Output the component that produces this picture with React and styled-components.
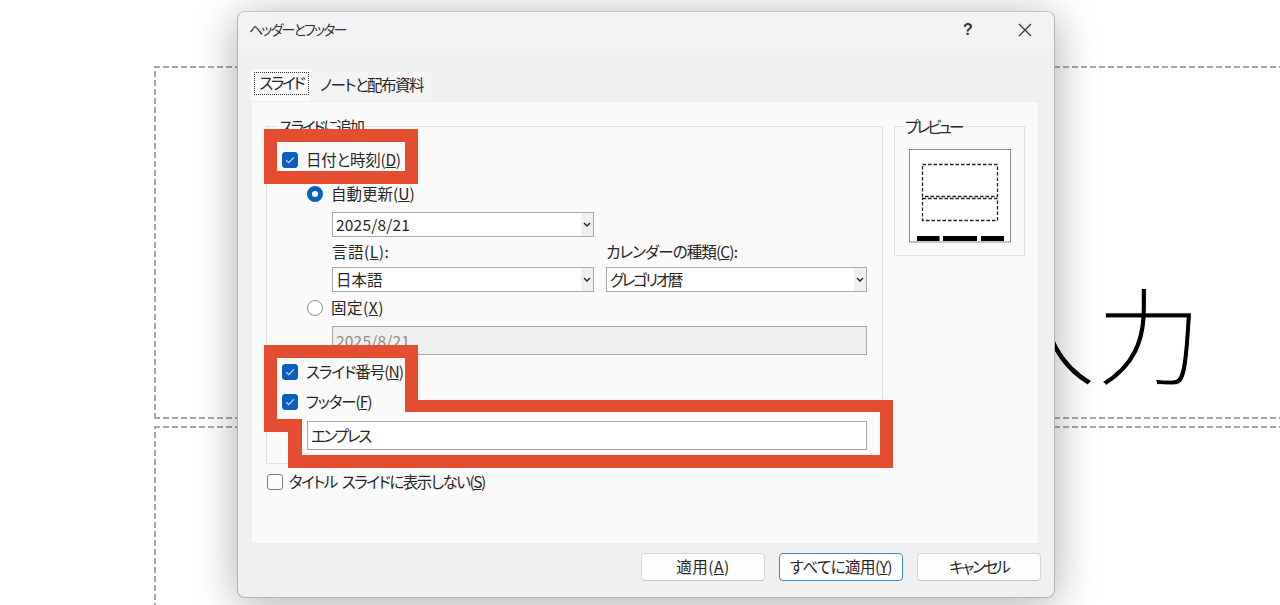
import React from 'react'
import styled, { createGlobalStyle } from 'styled-components'

const GlobalStyle = createGlobalStyle`
  html, body {
    margin: 0;
    height: 100%;
    background: #fff;
    overflow: hidden;
  }
  body {
    font-family: "Noto Sans CJK JP", "Noto Sans", sans-serif;
    font-feature-settings: "palt";
    font-size: 15.5px;
    color: #262626;
  }
  * {
    box-sizing: border-box;
  }
`

const Slide = styled.div`
  position: relative;
  width: 1280px;
  height: 605px;
  overflow: hidden;
`

const dash = '#a6a6a6'

const Placeholder = styled.div`
  position: absolute;
  left: 154px;
  top: ${props => props.$top}px;
  width: 1200px;
  height: ${props => props.$height}px;
  background-image:
    repeating-linear-gradient(90deg, ${dash} 0 6px, transparent 6px 9px),
    repeating-linear-gradient(90deg, ${dash} 0 6px, transparent 6px 9px),
    repeating-linear-gradient(0deg, ${dash} 0 6px, transparent 6px 9px);
  background-size: 100% 2px, 100% 2px, 2px 100%;
  background-position: 0 0, 0 100%, 0 0;
  background-repeat: no-repeat;
`

const SlideTitle = styled.div`
  position: absolute;
  left: 990px;
  top: 271px;
  font-size: 106px;
  line-height: 120px;
  font-weight: 300;
  color: #000;
  white-space: nowrap;
  font-feature-settings: normal;
  -webkit-text-stroke: 1px #fff;
`

const Dialog = styled.div`
  position: absolute;
  left: 237px;
  top: 11px;
  width: 818px;
  height: 587px;
  display: flex;
  flex-direction: column;
  background: #f0f0f0;
  border: 1px solid #b4b4b4;
  border-top-color: #c4c4c4;
  border-radius: 8px;
  box-shadow: 0 6px 44px rgba(0, 0, 0, 0.32);
  overflow: hidden;
`

const TitleBar = styled.div`
  height: 37px;
  flex: none;
  display: flex;
  align-items: center;
  padding-left: 11px;
  background: #f3f3f6;
`

const TitleText = styled.div`
  flex: 1;
  padding-bottom: 3px;
  font-size: 14px;
  letter-spacing: -1.8px;
  color: #333;
`

const HelpButton = styled.div`
  width: 40px;
  margin-right: 8px;
  padding-bottom: 2px;
  text-align: center;
  font-family: "Liberation Sans", sans-serif;
  font-weight: 700;
  font-size: 16px;
  color: #333;
`

const CloseButton = styled.div`
  display: flex;
  justify-content: center;
  width: 58px;
  padding-bottom: 2px;
`

const Body = styled.div`
  flex: 1;
  display: flex;
  flex-direction: column;
  padding: 20px 15px 0 13px;
`

const Tabs = styled.div`
  display: flex;
  align-items: flex-end;
  height: 32px;
`

const Tab = styled.div`
  height: ${props => (props.$active ? 32 : 29)}px;
  width: ${props => (props.$active ? 60 : 119)}px;
  padding: ${props => (props.$active ? '3px' : '0 8px')};
  margin-left: ${props => (props.$active ? 0 : 1)}px;
  background: ${props => (props.$active ? '#fafafa' : '#f4f4f4')};
  line-height: 25px;
  letter-spacing: ${props => props.$track}px;
  white-space: nowrap;
`

const TabFocus = styled.div`
  height: 23px;
  width: 55px;
  line-height: 19px;
  text-align: center;
  border: 1px dotted #333;
`

const Panel = styled.div`
  height: 443px;
  display: grid;
  grid-template-columns: 617px 131px;
  column-gap: 11px;
  align-content: start;
  padding: 24px 0 0 14px;
  background: #fafafa;
  border: 1px solid #eeeeee;
`

const Group = styled.div`
  border: 1px solid #e2e2e2;
  padding-bottom: ${props => props.$bottom || 0}px;
  height: ${props => (props.$height ? props.$height + 'px' : 'auto')};
`

const Legend = styled.div`
  width: fit-content;
  height: 18px;
  margin: -9px 0 0 ${props => props.$left}px;
  padding: 0 2px;
  line-height: 16px;
  letter-spacing: ${props => props.$track}px;
  background: #fafafa;
`

const OptionRow = styled.div`
  display: flex;
  align-items: center;
  height: 20px;
  gap: ${props => props.$gap || 9}px;
  margin-top: ${props => props.$top}px;
  margin-left: ${props => props.$left}px;
  white-space: nowrap;
`

const Label = styled.span`
  margin-top: -2px;
  margin-left: -1px;
  letter-spacing: ${props => props.$track || 0}px;
  word-spacing: ${props => props.$words || 0}px;
`

const CheckBox = styled.div`
  width: 16px;
  height: 16px;
  flex: none;
  display: flex;
  align-items: center;
  justify-content: center;
  border-radius: 3px;
  background: ${props => (props.$checked ? '#0a5fbd' : '#fcfcfc')};
  border: 1px solid ${props => (props.$checked ? '#0a5fbd' : '#7c7c7c')};
`

const Radio = styled.div`
  width: 16px;
  height: 16px;
  flex: none;
  border-radius: 50%;
  background: #fff;
  border: ${props => (props.$checked ? '5px solid #0a5fbd' : '1.5px solid #8a8a8a')};
`

const Field = styled.div`
  display: flex;
  align-items: center;
  justify-content: space-between;
  height: ${props => props.$height || 25}px;
  width: ${props => props.$width}px;
  margin-top: ${props => props.$top || 0}px;
  margin-left: ${props => props.$left || 0}px;
  padding-left: 3px;
  background: ${props => (props.$disabled ? '#efefef' : '#fff')};
  color: ${props => (props.$disabled ? '#8c8c8c' : '#262626')};
  border: 1px solid #a8a8a8;
  line-height: 20px;
`

const Arrow = styled.div`
  width: 12px;
  height: 23px;
  flex: none;
  display: flex;
  align-items: center;
  justify-content: center;
  background: #f0f0f0;
`

const DateColumns = styled.div`
  display: grid;
  grid-template-columns: 262px 261px;
  column-gap: 12px;
  margin: 6px 0 0 65px;
`

const ColumnLabel = styled.div`
  height: 20px;
  line-height: 17px;
  margin-bottom: 4px;
  letter-spacing: ${props => props.$track}px;
`

const PreviewDrawing = styled.svg`
  display: block;
  margin: 13px 0 0 14px;
`

const Footer = styled.div`
  display: flex;
  justify-content: flex-end;
  gap: 14px;
  margin-top: 9px;
  margin-right: -2px;
`

const Button = styled.div`
  width: 124px;
  height: 28px;
  line-height: 24px;
  text-align: center;
  letter-spacing: ${props => props.$track}px;
  background: #fdfdfd;
  border: ${props => (props.$primary ? '1px solid #3f86c4' : '1px solid #d6d6d6')};
  border-bottom-color: ${props => (props.$primary ? '#3f86c4' : '#c4c4c4')};
  border-radius: 4px;
`

const Highlight = styled.svg`
  position: absolute;
  left: 0;
  top: 0;
  pointer-events: none;
`

const Check = () => (
  <svg width='10' height='8' viewBox='0 0 10 8'>
    <path d='M1.2 4.2 L3.8 6.6 L8.8 1.4' fill='none' stroke='#cfe2f6' strokeWidth='1.2' />
  </svg>
)

const Chevron = () => (
  <svg width='8' height='5' viewBox='0 0 8 5'>
    <path d='M1 1 L4 4 L7 1' fill='none' stroke='#222' strokeWidth='1.4' />
  </svg>
)

const FieldText = styled.span`
  margin-top: -2px;
  letter-spacing: ${props => props.$track || 0}px;
`

const Select = ({ children, track, ...rest }) => (
  <Field {...rest}>
    <FieldText $track={track}>{children}</FieldText>
    <Arrow><Chevron /></Arrow>
  </Field>
)

export default function App () {
  return (
    <Slide>
      <GlobalStyle />
      <Placeholder $top={66} $height={353} />
      <Placeholder $top={426} $height={300} />
      <SlideTitle>入力</SlideTitle>

      <Dialog>
        <TitleBar>
          <TitleText>ヘッダーとフッター</TitleText>
          <HelpButton>?</HelpButton>
          <CloseButton>
            <svg width='14' height='14' viewBox='0 0 14 14'>
              <path d='M1 1 L13 13 M13 1 L1 13' stroke='#333' strokeWidth='1.2' fill='none' />
            </svg>
          </CloseButton>
        </TitleBar>
        <Body>
          <Tabs>
            <Tab $active $track={-2.2}><TabFocus>スライド</TabFocus></Tab>
            <Tab $track={-1.5}>ノートと配布資料</Tab>
          </Tabs>
          <Panel>
            <Group $bottom={13}>
              <Legend $left={10} $track={-2.2}>スライドに追加</Legend>
              <OptionRow $top={14} $left={15}>
                <CheckBox $checked><Check /></CheckBox>
                <Label $track={-0.25}>日付と時刻(<u>D</u>)</Label>
              </OptionRow>
              <OptionRow $top={14} $left={40}>
                <Radio $checked />
                <Label>自動更新(<u>U</u>)</Label>
              </OptionRow>
              <Select $top={8} $left={65} $width={262} track={0.2}>2025/8/21</Select>
              <DateColumns>
                <div>
                  <ColumnLabel $track={0.5}>言語(<u>L</u>):</ColumnLabel>
                  <Select $width={262}>日本語</Select>
                </div>
                <div>
                  <ColumnLabel $track={-0.9}>カレンダーの種類(<u>C</u>):</ColumnLabel>
                  <Select $width={261} track={-2.3}>グレゴリオ暦</Select>
                </div>
              </DateColumns>
              <OptionRow $top={6} $left={40}>
                <Radio />
                <Label $track={0.5}>固定(<u>X</u>)</Label>
              </OptionRow>
              <Field $disabled $top={8} $left={65} $width={535} $height={29}>
                <FieldText $track={0.2}>2025/8/21</FieldText>
              </Field>
              <OptionRow $top={7} $left={15}>
                <CheckBox $checked><Check /></CheckBox>
                <Label $track={-1}>スライド番号(<u>N</u>)</Label>
              </OptionRow>
              <OptionRow $top={10} $left={15}>
                <CheckBox $checked><Check /></CheckBox>
                <Label $track={-1.1}>フッター(<u>F</u>)</Label>
              </OptionRow>
              <Field $top={9} $left={40} $width={560} $height={29}>
                <FieldText $track={-2.2}>エンプレス</FieldText>
              </Field>
            </Group>
            <Group $height={130}>
              <Legend $left={8} $track={-2.8}>プレビュー</Legend>
              <PreviewDrawing width='102' height='94' viewBox='0 0 102 94'>
                <rect x='0.5' y='0.5' width='101' height='92.5' fill='#fff' stroke='#8a8a8a' />
                <g fill='none' stroke='#222' strokeWidth='1.3' strokeDasharray='3.5 2'>
                  <rect x='13.5' y='15.5' width='75' height='32' />
                  <rect x='13.5' y='49.5' width='75' height='22' />
                </g>
                <rect x='8' y='87' width='22.5' height='5' fill='#000' />
                <rect x='34' y='87' width='34' height='5' fill='#000' />
                <rect x='72' y='87' width='23' height='5' fill='#000' />
              </PreviewDrawing>
            </Group>
            <OptionRow $top={8} $left={1} $gap={7}>
              <CheckBox />
              <Label $track={-1.45} $words={3}>タイトル スライドに表示しない(<u>S</u>)</Label>
            </OptionRow>
          </Panel>
          <Footer>
            <Button $track={0.5}>適用(<u>A</u>)</Button>
            <Button $primary $track={-0.55}>すべてに適用(<u>Y</u>)</Button>
            <Button $track={-2.2}>キャンセル</Button>
          </Footer>
        </Body>
      </Dialog>

      <Highlight width='1280' height='605' viewBox='0 0 1280 605'>
        <path
          fill='#e54d31'
          fillRule='evenodd'
          d='M264 129 H418 V184 H264 Z M277 142 V171 H405 V142 Z
             M264 345 H418 V400 H893 V468 H288 V432 H264 Z
             M277 358 V419 H302 V455 H880 V412 H405 V358 Z'
        />
      </Highlight>
    </Slide>
  )
}
